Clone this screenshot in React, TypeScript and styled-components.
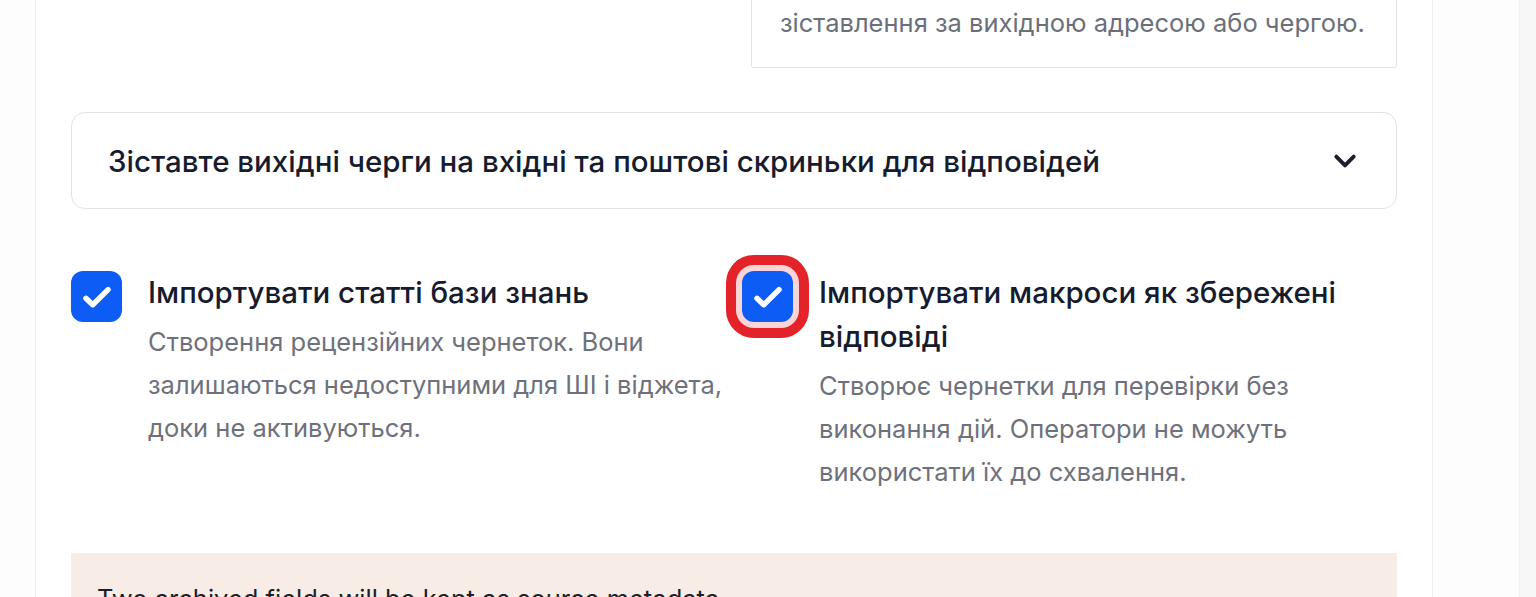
import React from "react";
import styled, { createGlobalStyle, css } from "styled-components";

const GlobalStyle = createGlobalStyle`
  html, body {
    margin: 0;
    padding: 0;
    height: 597px;
    overflow: hidden;
    background: #fdfdfd;
    font-family: Inter, "Noto Sans", sans-serif;
    -webkit-font-smoothing: antialiased;
  }
  * { box-sizing: border-box; }
`;

const Shell = styled.div`
  display: flex;
  height: 597px;
  overflow: hidden;
`;

const Main = styled.div`
  flex: 1;
  padding: 0 86px 0 35px;
`;

const Rail = styled.div`
  width: 17px;
  background: #f7f7f7;
  border-left: 1px solid #f0f0f0;
`;

const Card = styled.div`
  background: #ffffff;
  border-left: 1px solid #eceeef;
  border-right: 1px solid #eceeef;
  padding: 0 35px 40px;
  min-height: 700px;
`;

const TopRow = styled.div`
  display: flex;
  justify-content: flex-end;
  margin-top: -66px;
`;

const InfoBox = styled.div`
  width: 646px;
  border: 1.5px solid #e2e3e7;
  border-radius: 2px;
  padding: 22px 28px 22px;
  font-size: 25.5px;
  line-height: 44px;
  color: #6b6f7a;
  white-space: nowrap;
`;

const Accordion = styled.button`
  margin-top: 44px;
  width: 100%;
  height: 97px;
  display: flex;
  align-items: center;
  justify-content: space-between;
  padding: 0 38px 0 36px;
  background: #fff;
  border: 1.5px solid #e1e3e8;
  border-radius: 14px;
  font: inherit;
  cursor: pointer;
`;

const AccordionTitle = styled.span`
  font-size: 29.5px;
  font-weight: 500;
  color: #161b2e;
`;

const Options = styled.div`
  margin-top: 61px;
  display: grid;
  grid-template-columns: 1fr 1fr;
  column-gap: 16px;
`;

const Option = styled.label`
  display: flex;
  align-items: flex-start;
  gap: 26px;
`;

const Box = styled.span<{ $focused?: boolean }>`
  flex: none;
  margin-top: 1px;
  width: 51px;
  height: 51px;
  border-radius: 12px;
  background: #0d5cf6;
  display: flex;
  align-items: center;
  justify-content: center;
  ${(p) =>
    p.$focused &&
    css`
      box-shadow: 0 0 0 6px #fbd4d5, 0 0 0 16px #e3222a;
    `}
`;

const OptionText = styled.div`
  display: flex;
  flex-direction: column;
  min-width: 0;
`;

const OptionTitle = styled.div`
  font-size: 29.5px;
  line-height: 44px;
  font-weight: 500;
  color: #161b2e;
`;

const OptionDesc = styled.div`
  margin-top: 6px;
  font-size: 25.5px;
  line-height: 43px;
  color: #6e717b;
`;

const Banner = styled.div`
  margin-top: 60px;
  background: #f8ece6;
  padding: 24px 26px;
  font-size: 25.5px;
  line-height: 44px;
  color: #1c1f2b;
`;

const Check = () => (
  <svg width="38" height="38" viewBox="0 0 24 24" fill="none">
    <path d="M5 12.8l4.3 4.1L19 7.3" stroke="#fff" strokeWidth="3.4" strokeLinecap="round" strokeLinejoin="round" />
  </svg>
);

const Chevron = () => (
  <svg width="26" height="26" viewBox="0 0 24 24" fill="none">
    <path d="M4 8l8 8 8-8" stroke="#1b1f2e" strokeWidth="3.6" strokeLinecap="round" strokeLinejoin="round" />
  </svg>
);

const options = [
  {
    title: "Імпортувати статті бази знань",
    desc: "Створення рецензійних чернеток. Вони залишаються недоступними для ШІ і віджета, доки не активуються.",
    focused: false,
  },
  {
    title: "Імпортувати макроси як збережені відповіді",
    desc: "Створює чернетки для перевірки без виконання дій. Оператори не можуть використати їх до схвалення.",
    focused: true,
  },
];

export default function App() {
  return (
    <Shell>
      <GlobalStyle />
      <Main>
        <Card>
          <TopRow>
            <InfoBox>
              Якщо адресу не знайдено, виконується
              <br />
              зіставлення за вихідною адресою або чергою.
            </InfoBox>
          </TopRow>
          <Accordion type="button">
            <AccordionTitle>Зіставте вихідні черги на вхідні та поштові скриньки для відповідей</AccordionTitle>
            <Chevron />
          </Accordion>
          <Options>
            {options.map((o) => (
              <Option key={o.title}>
                <Box $focused={o.focused}>
                  <Check />
                </Box>
                <OptionText>
                  <OptionTitle>{o.title}</OptionTitle>
                  <OptionDesc>{o.desc}</OptionDesc>
                </OptionText>
              </Option>
            ))}
          </Options>
          <Banner>Two archived fields will be kept as source metadata.</Banner>
        </Card>
      </Main>
      <Rail />
    </Shell>
  );
}
